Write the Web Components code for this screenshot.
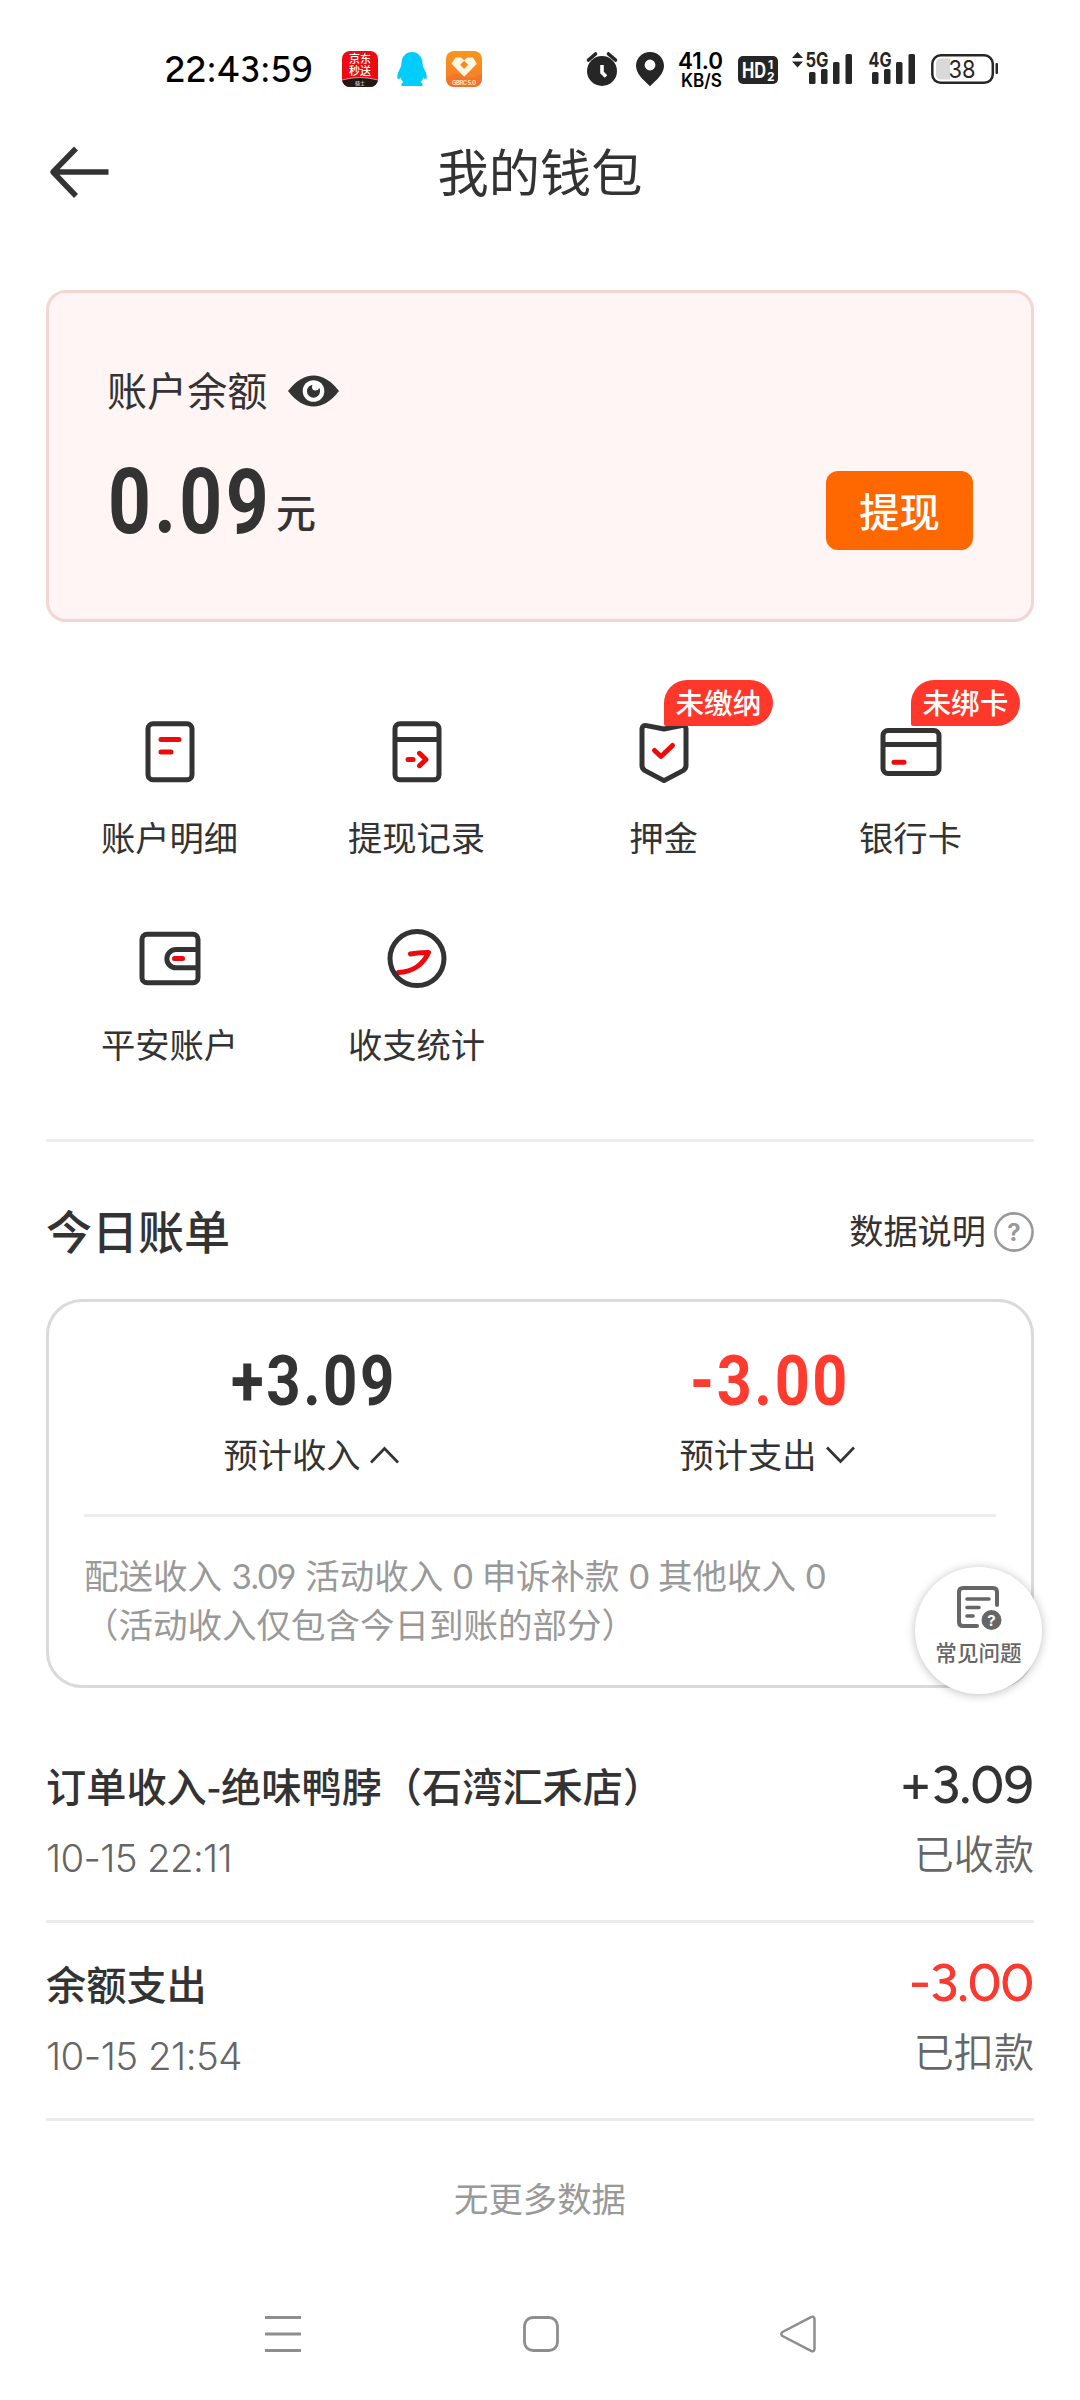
<!DOCTYPE html>
<html lang="zh-CN">
<head>
<meta charset="utf-8">
<title>我的钱包</title>
<style>
  html, body { margin: 0; background: #fff; }
  body { width: 1080px; height: 2400px; overflow: hidden; color: #333;
    font-family: "Noto Sans CJK SC", sans-serif; }
</style>
</head>
<body>
<wallet-app></wallet-app>

<script>
const define = (name, html, setup) => {
  const tpl = document.createElement('template');
  tpl.innerHTML = html;
  customElements.define(name, class extends HTMLElement {
    connectedCallback() {
      if (this.shadowRoot) return;
      this.attachShadow({ mode: 'open' }).appendChild(tpl.content.cloneNode(true));
      if (setup) setup(this, this.shadowRoot);
    }
  });
};

/* One line of text stretched to a given width, by tracking or by horizontal scale. */
define('fit-text', `
  <style>
    :host { display: inline-block; white-space: nowrap; }
    span { display: inline-block; transform-origin: 0 50%; }
  </style><span><slot></slot></span>`, (host, root) => {
  const span = root.querySelector('span');
  const want = +host.getAttribute('width');
  const have = span.getBoundingClientRect().width;
  host.style.width = want + 'px';
  if (host.getAttribute('mode') === 'scale') span.style.transform = `scaleX(${want / have})`;
  else span.style.letterSpacing = (want - have) / host.textContent.length + 'px';
});

define('status-bar', `
  <style>
    :host { display: flex; box-sizing: border-box; height: 110px; padding: 48px 80px 0 165px; align-items: flex-start; color: #000; }
    svg { display: block; flex: none; overflow: visible; }
    .time { font: 500 36px/42px Figtree, "Noto Sans", sans-serif; color: #000; padding-top: 1px; }
    .apps { display: flex; margin-left: 28px; }
    .sys { display: flex; margin-left: 102px; }
    text { font-family: Inter, sans-serif; }
    .cjk { font-family: "Noto Sans CJK SC", sans-serif; }
  </style>
  <div class="time"><fit-text width="148">22:43:59</fit-text></div>
  <div class="apps">
    <svg width="142" height="42" viewBox="341 48 142 42">
      <defs>
        <clipPath id="a"><rect x="342" y="51" width="36" height="36" rx="8"/></clipPath>
        <clipPath id="c"><rect x="446" y="51" width="36" height="36" rx="8"/></clipPath>
        <linearGradient id="g" x1="0" y1="0" x2="0" y2="1"><stop offset="0" stop-color="#f8961c"/><stop offset="1" stop-color="#f37a2c"/></linearGradient>
      </defs>
      <g clip-path="url(#a)">
        <rect x="342" y="51" width="36" height="36" fill="#ee0a12"/>
        <path d="M342 80q18-5 36 0v8h-36z" fill="#231815"/>
        <path d="M342 80q18-5 36 0" stroke="#fff" stroke-width=".8" fill="none" opacity=".7"/>
        <text class="cjk" x="360" y="63" font-size="11" font-weight="500" fill="#fff" text-anchor="middle">京东</text>
        <text class="cjk" x="360" y="74.600" font-size="11" font-weight="500" fill="#fff" text-anchor="middle">秒送</text>
        <text class="cjk" x="360" y="84.800" font-size="5" fill="#fff" text-anchor="middle">骑士</text>
      </g>
      <path fill="#00cdfb" d="M412 52c-6.200 0-10.200 5-10.500 10.500-.1 2-.3 3.500-1 5-1.500 3-3.700 7-3.200 10.600.3 1.700 1.700 1.300 3.200-.6.6 1.900 1.500 3.500 2.800 4.800-1.500.6-2.300 1.600-1.800 3.700h21c.5-2.100-.3-3.100-1.800-3.700 1.300-1.300 2.200-2.900 2.800-4.800 1.500 1.900 2.900 2.300 3.200.6.5-3.600-1.700-7.600-3.200-10.600-.7-1.500-.9-3-1-5C422.200 57 418.200 52 412 52z"/>
      <g clip-path="url(#c)">
        <rect x="446" y="51" width="36" height="36" fill="url(#g)"/>
        <path d="M446 79q9-8 18-3t18-3v14h-36z" fill="#f0672a" opacity=".45"/>
        <path d="M455.500 57.500h5.500l3.200 2.700 3.200-2.700h5.500l4 6.300-12.700 13-12.700-13z" fill="#fff6e6"/>
        <path d="M464.200 60.700l4 4-4 4.200-4-4.200z" fill="#f58a20"/>
        <text x="464" y="85" font-size="6" font-weight="700" fill="#ffe0b8" text-anchor="middle" textLength="24">GBRC 5.0</text>
      </g>
    </svg>
  </div>
  <div class="sys">
    <svg width="416" height="42" viewBox="585 48 416 42" fill="#262626">
      <circle cx="602" cy="71" r="15"/>
      <path d="M588.500 60l7-6M615.500 60l-7-6" stroke="#262626" stroke-width="3.600" stroke-linecap="round"/>
      <path d="M602 65v7.500l4 4" stroke="#fff" stroke-width="3.600" fill="none"/>
      <path fill-rule="evenodd" d="M650 52c7.800 0 14 6.200 14 13.700 0 7.800-7 13.800-14 20.600-7-6.800-14-12.800-14-20.600C636 58.200 642.200 52 650 52zm0 7.600a5.400 5.400 0 100 10.800 5.400 5.400 0 000-10.800z"/>
      <text x="678" y="69.300" font-size="23" font-weight="600" fill="#000" textLength="45" lengthAdjust="spacingAndGlyphs">41.0</text>
      <text x="681" y="87" font-size="18" font-weight="600" fill="#000" textLength="41" lengthAdjust="spacingAndGlyphs">KB/S</text>
      <rect x="738" y="56" width="40" height="28" rx="5"/>
      <text x="742" y="78" font-size="21" font-weight="700" fill="#fff" textLength="24" lengthAdjust="spacingAndGlyphs">HD</text>
      <text x="768" y="69" font-size="12" font-weight="700" fill="#fff">1</text>
      <text x="767" y="81" font-size="12" font-weight="700" fill="#fff">2</text>
      <path d="M792 58l5.500-6 5.500 6zM792 61.500l5.500 6 5.500-6z"/>
      <text x="805.500" y="67.300" font-size="20" font-weight="700" textLength="23" lengthAdjust="spacingAndGlyphs">5G</text>
      <g id="bars"><rect x="809" y="72" width="6.500" height="12" rx="1.500"/><rect x="821" y="69" width="6.500" height="15" rx="1.500"/><rect x="833" y="62" width="6.500" height="22" rx="1.500"/><rect x="845.500" y="54" width="6.500" height="30" rx="1.500"/></g>
      <text x="868.500" y="67.300" font-size="20" font-weight="700" textLength="23" lengthAdjust="spacingAndGlyphs">4G</text>
      <use href="#bars" x="63"/>
      <rect x="932.300" y="55.300" width="60.500" height="27.500" rx="8.500" fill="#fff" stroke="#262626" stroke-width="2.500"/>
      <path d="M950 58.500h-9q-5 0-5 5v11q0 5 5 5h9z" fill="#d9d9d9"/>
      <rect x="995.500" y="63" width="2.500" height="11" rx="1"/>
      <text x="948.500" y="77.600" font-size="24" font-weight="400" textLength="27" lengthAdjust="spacingAndGlyphs">38</text>
    </svg>
  </div>`);

define('page-header', `
  <style>
    :host { display: grid; grid-template-columns: 120px 1fr 120px; align-items: center; height: 124px; }
    svg { display: block; margin-left: 48px; }
    h1 { margin: 0; padding-bottom: 4px; font-weight: 400; font-size: 51.2px; line-height: 70px; text-align: center; }
  </style>
  <svg width="64" height="54" viewBox="48 145 64 54" fill="none" stroke="#333" stroke-width="5.500"><path d="M76 148.500L53 172l23 24M53 172h55.500" stroke-linejoin="round"/></svg>
  <h1><slot></slot></h1>`);

define('balance-card', `
  <style>
    :host { display: flex; box-sizing: border-box; height: 332px; margin-top: 56px; border: 3px solid #f3d6d3; border-radius: 20px;
      background: #fff5f5; padding: 0 58px; justify-content: space-between; }
    .info { display: flex; flex-direction: column; padding-top: 67px; }
    .label { display: flex; align-items: center; font-size: 40.1px; line-height: 54px; height: 58px; }
    .label svg { margin: 3px 0 0 21px; }
    .sum { display: flex; align-items: flex-start; margin-top: 30px; }
    .num { font: 700 90px/110px Roboto, sans-serif; letter-spacing: 4px; padding-left: 1px; }
    .unit { font-size: 40px; font-weight: 500; margin: 38px 0 0 4px; line-height: 50px; }
    .btn { margin-top: 178px; width: 147px; height: 79px; border: 0; padding: 0 0 2px; border-radius: 12px; background: #ff6700; color: #fff;
      font: 500 40.32px/70px "Noto Sans CJK SC", sans-serif; }
  </style>
  <div class="info">
    <div class="label">账户余额
      <svg width="51" height="32" viewBox="0 0 51 32"><path d="M0 16Q12 .5 25.500 .5T51 16Q39 31.500 25.500 31.500T0 16z" fill="#333"/><circle cx="25.500" cy="16" r="10.800" fill="#fff"/><circle cx="25.500" cy="16.200" r="6.500" fill="#333"/><circle cx="27.500" cy="12" r="3.500" fill="#fff"/></svg>
    </div>
    <div class="sum"><span class="num"><fit-text width="164" mode="scale">0.09</fit-text></span><span class="unit">元</span></div>
  </div>
  <button class="btn">提现</button>`);

define('menu-tile', `
  <style>
    :host { display: flex; flex-direction: column; align-items: center; position: relative; height: 147px; }
    .ico { height: 72px; width: 72px; display: block; }
    .name { font-size: 34.3px; line-height: 50px; margin-top: 23px; }
    .tag { position: absolute; left: 123.500px; top: -36px; height: 46px; padding: 0 12px; border-radius: 23px 23px 23px 2px; background: #ff382b;
      color: #fff; font-weight: 500; font-size: 28.6px; line-height: 43px; white-space: nowrap; }
  </style>
  <div class="ico"><slot name="icon"></slot></div>
  <div class="name"><slot></slot></div>`, (host, root) => {
  const tag = host.getAttribute('tag');
  if (tag) {
    const el = document.createElement('div');
    el.className = 'tag';
    el.textContent = tag;
    root.appendChild(el);
  }
});

define('menu-grid', `
  <style>
    :host { display: grid; grid-template-columns: repeat(4, 1fr); row-gap: 60px; margin-top: 94px; }
    svg { display: block; fill: none; stroke: #333; stroke-width: 5; stroke-linejoin: round; }
    .r { stroke: #ee0a0a; stroke-linecap: round; }
  </style>
  <menu-tile><svg slot="icon" width="72" height="72"><rect x="14" y="7.800" width="44" height="56" rx="5"/><path class="r" d="M27 23.500h18M27 36h10"/></svg>账户明细</menu-tile>
  <menu-tile><svg slot="icon" width="72" height="72"><rect x="14" y="7.800" width="44" height="56" rx="5"/><path d="M14 23.500h44"/><path class="r" d="M27 43.500h5M38.500 37.300l6.500 6.200-6.500 6.200"/></svg>提现记录</menu-tile>
  <menu-tile tag="未缴纳"><svg slot="icon" width="72" height="72"><path d="M18.500 9.600q-4-.6-4.500 3v37q0 3.200 3 5l19 10 19-10q3-1.800 3-5v-37q-.5-3.600-4.500-3L36 13z"/><path class="r" d="M26.500 34.500l6.500 6 11.500-11"/></svg>押金</menu-tile>
  <menu-tile tag="未绑卡"><svg slot="icon" width="72" height="72"><rect x="8" y="14.500" width="56" height="43" rx="5"/><path d="M8 28.500h56"/><path class="r" d="M19 46.200h10"/></svg>银行卡</menu-tile>
  <menu-tile><svg slot="icon" width="72" height="72"><rect x="8" y="11.200" width="56" height="48.500" rx="5"/><path d="M64 26.500H42a9 9 0 000 18.300h22"/><path class="r" d="M40.500 35.600h8"/></svg>平安账户</menu-tile>
  <menu-tile><svg slot="icon" width="72" height="72"><path class="r" d="M17.500 49.500C31 49 42 42 47.500 29.500c-6-.1-12 .3-18 1.500"/><circle cx="36" cy="35.600" r="27"/></svg>收支统计</menu-tile>`);

define('bill-header', `
  <style>
    :host { display: flex; justify-content: space-between; align-items: center; box-sizing: border-box; margin-top: 69px; height: 160px; border-top: 3px solid #ededed; padding-top: 17px; }
    h2 { margin: 0; padding-bottom: 1px; font-weight: 500; font-size: 46px; line-height: 60px; }
    .help { display: flex; align-items: center; font-size: 34.2px; line-height: 50px; gap: 8px; }
    svg { display: block; margin-top: 5px; }
    text { font: 700 24px Inter, sans-serif; fill: #999; }
  </style>
  <h2>今日账单</h2>
  <div class="help">数据说明<svg width="40" height="40"><circle cx="20" cy="20" r="18.600" fill="none" stroke="#999" stroke-width="2.600"/><text x="20" y="28.500" text-anchor="middle">?</text></svg></div>`);

define('bill-total', `
  <style>
    :host { display: flex; flex-direction: column; align-items: center; flex: 1; }
    .num { font: 700 71px/84px Roboto, sans-serif; letter-spacing: 3px; color: var(--tone, #333); padding-left: 3px; }
    .cap { display: flex; align-items: center; gap: 9px; font-size: 34.3px; line-height: 50px; margin: 5px 2px 0 0; }
    svg { display: block; fill: none; stroke: #333; stroke-width: 2.700; margin-top: 4px; }
    :host([open]) svg { transform: scaleY(-1); }
  </style>
  <div class="num"><slot name="sum"></slot></div>
  <div class="cap"><slot></slot><svg width="29" height="18"><path d="M1 1.500l13.500 14L28 1.500"/></svg></div>`);

define('bill-summary', `
  <style>
    :host { display: block; box-sizing: border-box; height: 389px; border: 3px solid #dadada; border-radius: 36px; padding: 37px 35px 0; }
    .totals { display: flex; height: 178px; border-bottom: 3px solid #ededed; box-sizing: border-box; }
    p { margin: 33px 0 0; font-size: 34.5px; line-height: 49px; color: #999; white-space: nowrap; }
    .n { font-family: Lato, sans-serif; word-spacing: 2px; letter-spacing: -1.1px; line-height: 0; white-space: pre; }
  </style>
  <div class="totals">
    <bill-total open><fit-text slot="sum" width="166" mode="scale">+3.09</fit-text>预计收入</bill-total>
    <bill-total style="--tone:#ff3a2e"><fit-text slot="sum" width="160" mode="scale">-3.00</fit-text>预计支出</bill-total>
  </div>
  <p>配送收入<span class="n"> 3.09 </span>活动收入<span class="n"> 0 </span>申诉补款<span class="n"> 0 </span>其他收入<span class="n"> 0</span><br>（活动收入仅包含今日到账的部分）</p>`);

define('bill-entry', `
  <style>
    :host { display: flex; justify-content: space-between; box-sizing: border-box; height: 198px; border-bottom: 3px solid #ebebeb; }
    div { display: flex; flex-direction: column; }
    .l { padding-top: 35px; gap: 21px; }
    .r { padding-top: 35px; gap: 17px; align-items: flex-end; }
    .title { font-size: 40.2px; font-weight: 500; line-height: 50px; }
    .date { font: 350 38.500px/50px Inter, sans-serif; color: #666; padding-top: 2px; margin-bottom: -2px; }
    .sum { font: 550 53px/50px Figtree, "Noto Sans", sans-serif; color: var(--tone, #333); padding-right: 1px; }
    .state { font-size: 40.100px; line-height: 50px; color: #666; font-weight: 350; }
  </style>
  <div class="l"><span class="title"><slot></slot></span><span class="date"><slot name="date"></slot></span></div>
  <div class="r"><span class="sum"><slot name="sum"></slot></span><span class="state"><slot name="state"></slot></span></div>`);

define('faq-button', `
  <style>
    :host { position: absolute; left: 915px; top: 1567px; width: 127px; height: 127px; border-radius: 50%; background: #fff;
      box-shadow: 0 1px 10px rgba(0,0,0,.26); display: flex; flex-direction: column; align-items: center; }
    svg { display: block; margin-top: 18px; }
    span { font-size: 21.600px; line-height: 30px; color: #666; font-weight: 500; margin-top: 6px; }
    text { font: 700 15px Inter, sans-serif; fill: #fff; }
  </style>
  <svg width="46" height="46" fill="none" stroke="#666" stroke-width="4"><path d="M41 20V7q0-4-4-4H7Q3 3 3 7v30q0 4 4 4h14" stroke-linecap="round"/><path d="M11 14h22M11 22.500h12M11 31h6" stroke-linecap="round" stroke-width="3.600"/><circle cx="35.500" cy="35" r="10" fill="#666" stroke="none"/><text x="35.500" y="40.500" text-anchor="middle" stroke="none">?</text></svg>
  <span>常见问题</span>`);

define('system-nav', `
  <style>
    :host { display: flex; box-sizing: border-box; height: 123px; padding: 0 262px 9px 263px; justify-content: space-between; align-items: center; }
    svg { display: block; fill: none; stroke: #8e8e8e; stroke-width: 3; }
  </style>
  <svg width="40" height="40"><path d="M2 3.500h36M2 20h36M2 36.500h36"/></svg>
  <svg width="40" height="40"><rect x="3.500" y="3.500" width="33" height="33" rx="8.500" stroke-width="2.800"/></svg>
  <svg width="40" height="40"><path d="M36.500 5v30q-.5 3.500-3.500 1.800L4.500 22q-2.500-2 0-4L33 3.200Q36 1.500 36.500 5z" stroke-width="2.500"/></svg>`);

define('wallet-app', `
  <style>
    :host { display: block; position: relative; width: 1080px; height: 2400px; background: #fff; }
    main { padding: 0 46px; }
    .list { margin-top: 37px; }
    .end { height: 156px; display: flex; align-items: center; justify-content: center; font-size: 34.4px; line-height: 50px; color: #999; }
    .end span { margin-top: -4px; }
  </style>
  <status-bar></status-bar>
  <page-header>我的钱包</page-header>
  <main>
    <balance-card></balance-card>
    <menu-grid></menu-grid>
    <bill-header></bill-header>
    <bill-summary></bill-summary>
    <div class="list">
      <bill-entry>订单收入-绝味鸭脖（石湾汇禾店）<fit-text slot="date" width="186">10-15 22:11</fit-text><fit-text slot="sum" width="134">+3.09</fit-text><span slot="state">已收款</span></bill-entry>
      <bill-entry style="--tone:#f83a30">余额支出<fit-text slot="date" width="196">10-15 21:54</fit-text><fit-text slot="sum" width="124">-3.00</fit-text><span slot="state">已扣款</span></bill-entry>
    </div>
    <div class="end"><span>无更多数据</span></div>
  </main>
  <system-nav></system-nav>
  <faq-button></faq-button>`);
</script>
</body>
</html>
